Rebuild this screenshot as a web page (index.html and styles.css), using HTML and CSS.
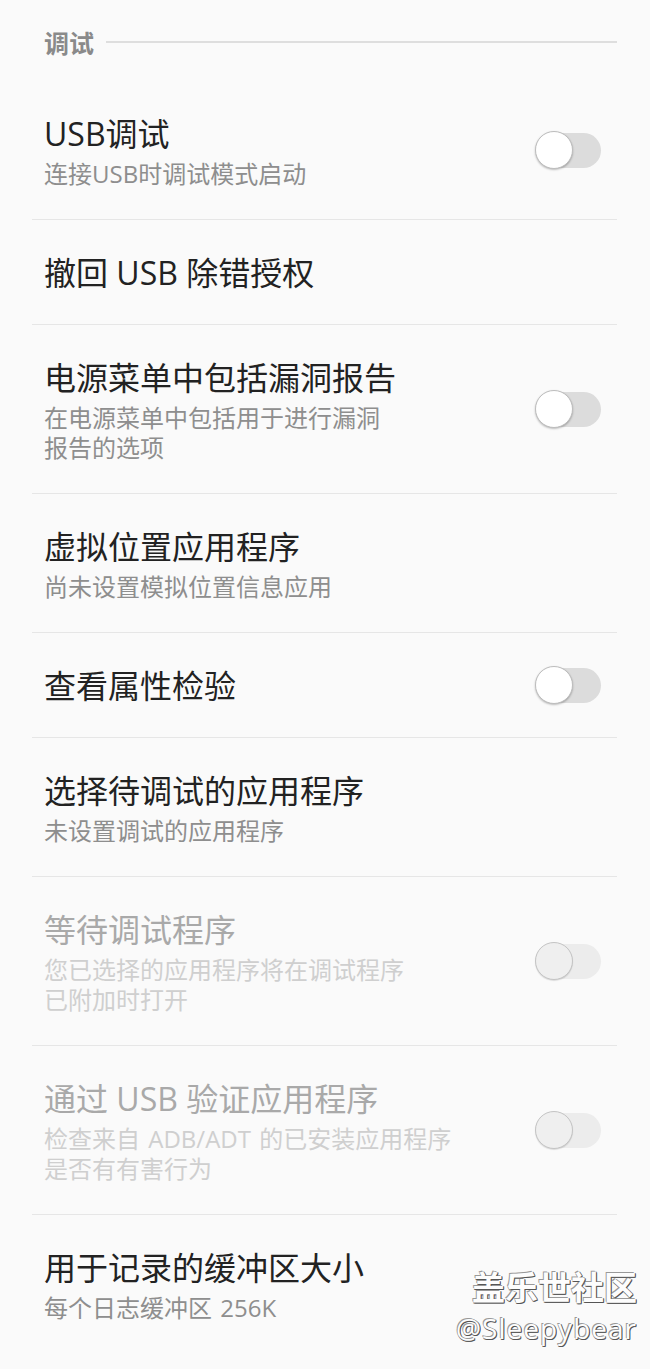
FILE: index.html
```html
<!DOCTYPE html>
<html lang="zh-CN">
<head>
<meta charset="utf-8">
<title>调试</title>
<link rel="stylesheet" href="styles.css">
</head>
<body>
<div class="page">
  <div class="section-head">
    <span class="section-title">调试</span>
    <span class="section-line"></span>
  </div>
  <ul class="list">
    <li class="item">
      <div class="text">
        <div class="title">USB调试</div>
        <div class="sub">连接USB时调试模式启动</div>
      </div>
      <span class="toggle"><span class="track"></span><span class="thumb"></span></span>
    </li>
    <li class="item">
      <div class="text">
        <div class="title">撤回 USB 除错授权</div>
      </div>
    </li>
    <li class="item">
      <div class="text">
        <div class="title">电源菜单中包括漏洞报告</div>
        <div class="sub">在电源菜单中包括用于进行漏洞<br>报告的选项</div>
      </div>
      <span class="toggle"><span class="track"></span><span class="thumb"></span></span>
    </li>
    <li class="item">
      <div class="text">
        <div class="title">虚拟位置应用程序</div>
        <div class="sub">尚未设置模拟位置信息应用</div>
      </div>
    </li>
    <li class="item">
      <div class="text">
        <div class="title">查看属性检验</div>
      </div>
      <span class="toggle"><span class="track"></span><span class="thumb"></span></span>
    </li>
    <li class="item">
      <div class="text">
        <div class="title">选择待调试的应用程序</div>
        <div class="sub">未设置调试的应用程序</div>
      </div>
    </li>
    <li class="item disabled">
      <div class="text">
        <div class="title">等待调试程序</div>
        <div class="sub">您已选择的应用程序将在调试程序<br>已附加时打开</div>
      </div>
      <span class="toggle"><span class="track"></span><span class="thumb"></span></span>
    </li>
    <li class="item disabled">
      <div class="text">
        <div class="title">通过 USB 验证应用程序</div>
        <div class="sub">检查来自 ADB/ADT 的已安装应用程序<br>是否有有害行为</div>
      </div>
      <span class="toggle"><span class="track"></span><span class="thumb"></span></span>
    </li>
    <li class="item last">
      <div class="text">
        <div class="title">用于记录的缓冲区大小</div>
        <div class="sub">每个日志缓冲区 256K</div>
      </div>
    </li>
  </ul>
  <div class="watermark">
    <div class="wm-brand">盖乐世社区</div>
    <div class="wm-user">@Sleepybear</div>
  </div>
</div>
</body>
</html>
```
FILE: styles.css
```css
html, body {
  margin: 0;
  padding: 0;
  background: #fafafa;
}
body {
  font-family: "Open Sans", "Noto Sans CJK SC", "Noto Sans", sans-serif;
  width: 650px;
  height: 1369px;
  overflow: hidden;
}
.page {
  position: relative;
  height: 1369px;
}
.section-head {
  display: flex;
  align-items: flex-start;
  gap: 12px;
  height: 81px;
  box-sizing: border-box;
  padding: 26px 33px 0 44px;
}
.section-title {
  font-size: 25px;
  font-weight: bold;
  color: #8a8a8a;
  line-height: 32px;
  font-family: "Noto Sans CJK SC", sans-serif;
}
.section-line {
  flex: 1;
  height: 2px;
  background: #dedede;
  margin-top: 15px;
}
.list {
  list-style: none;
  margin: 0 33px 0 32px;
  padding: 0;
}
.item {
  display: flex;
  align-items: center;
  justify-content: space-between;
  padding: 32px 16px 30px 12px;
  border-bottom: 1px solid #e6e6e6;
}
.item.last {
  border-bottom: none;
}
.title {
  font-size: 32px;
  line-height: 42px;
  color: #222;
}
.sub {
  font-size: 24px;
  line-height: 30px;
  color: #8e8e8e;
  margin-top: 4px;
  word-spacing: 2px;
}
.disabled .title {
  color: #a9a9a9;
}
.disabled .sub {
  color: #cfcfcf;
}
.toggle {
  position: relative;
  width: 67px;
  height: 40px;
  flex: none;
}
.track {
  position: absolute;
  right: 0;
  top: 2px;
  width: 58px;
  height: 35px;
  border-radius: 18px;
  background: #dcdcdc;
}
.thumb {
  position: absolute;
  left: 1px;
  top: 0;
  width: 36px;
  height: 36px;
  border-radius: 50%;
  background: #fff;
  border: 1.5px solid #bdbdbd;
  box-shadow: 0 1px 2px rgba(0,0,0,0.25);
}
.disabled .track {
  background: #ececec;
}
.disabled .thumb {
  background: #efefef;
  border-color: #c4c4c4;
  box-shadow: 0 1px 1px rgba(0,0,0,0.12);
}
.watermark {
  position: absolute;
  right: 13px;
  top: 1262px;
  text-align: right;
  color: #fdfdfd;
  text-shadow: 1px 1px 0 #555, -1px -1px 0 #999, 1px 0 0 #707070, 0 1px 0 #707070;
}
.wm-brand {
  font-family: "Noto Sans CJK SC", sans-serif;
  font-weight: bold;
  font-size: 33px;
  line-height: 48px;
}
.wm-user {
  font-family: "Open Sans", "Liberation Sans", sans-serif;
  font-size: 28px;
  line-height: 36px;
  letter-spacing: 1px;
}
```
